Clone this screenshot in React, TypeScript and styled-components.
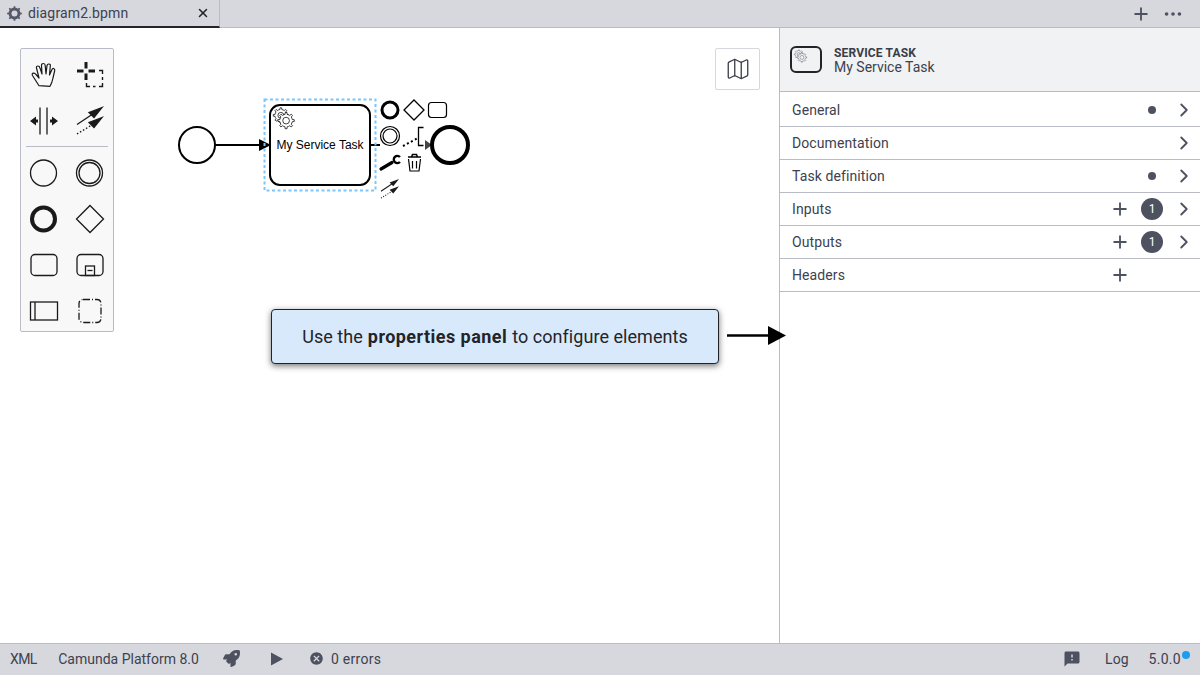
import React from 'react';
import styled, { createGlobalStyle } from 'styled-components';
import { Map, Plus, ChevronRight, Ellipsis, X } from 'lucide-react';
import { FaRocket } from 'react-icons/fa';
import { MdCancel, MdFeedback } from 'react-icons/md';

const GlobalStyle = createGlobalStyle`
  html, body {
    margin: 0;
    padding: 0;
    background: #fff;
    overflow: hidden;
  }
  body {
    font-family: Roboto, "Noto Sans", sans-serif;
    font-size: 14px;
    color: #22242a;
  }
`;

const AppFrame = styled.div`
  position: relative;
  display: flex;
  flex-direction: column;
  width: 1200px;
  height: 675px;
  overflow: hidden;
`;

const TabBar = styled.div`
  display: flex;
  align-items: stretch;
  height: 28px;
  box-sizing: border-box;
  background: #d6d8de;
  border-bottom: 1px solid #b9bcc6;
`;

const Tab = styled.div`
  display: flex;
  align-items: center;
  box-sizing: border-box;
  width: 220px;
  height: 28px;
  padding: 0 9px 0 7px;
  border-right: 1px solid #b9bcc6;
  border-bottom: 2px solid #22242a;
  color: #3d4150;
`;

const TabTitle = styled.span`
  flex: 1;
  margin-left: 6px;
  letter-spacing: 0.15px;
`;

const TabActions = styled.div`
  display: flex;
  align-items: center;
  gap: 11px;
  margin-left: auto;
  padding: 0 16px 0 0;
  color: #4d5160;
`;

const Main = styled.div`
  flex: 1;
  display: flex;
  min-height: 0;
`;

const Canvas = styled.div`
  position: relative;
  width: 779px;
  background: #fff;
`;

const DiagramSvg = styled.svg`
  display: block;
`;

const Palette = styled.div`
  position: absolute;
  left: 20px;
  top: 20px;
  box-sizing: border-box;
  width: 94px;
  height: 284px;
  padding: 3px 0 0;
  background: #f8f8f8;
  border: 1px solid #b9bcc6;
  border-radius: 2px;
`;

const PaletteGroup = styled.div`
  display: grid;
  grid-template-columns: 46px 46px;
  grid-auto-rows: 46px;
`;

const PaletteSeparator = styled.div`
  height: 1px;
  margin: 2px 5px 3px;
  background: #b9bcc6;
`;

const PaletteEntry = styled.div`
  display: flex;
  align-items: center;
  justify-content: center;
  color: #1a1a1a;
`;

const MiniMapToggle = styled.div`
  position: absolute;
  left: 715px;
  top: 20px;
  box-sizing: border-box;
  display: flex;
  align-items: center;
  justify-content: center;
  width: 45px;
  height: 42px;
  background: #fff;
  border: 1px solid #d6d8de;
  border-radius: 2px;
  color: #3a3d46;
`;

const Panel = styled.div`
  box-sizing: border-box;
  width: 421px;
  border-left: 1px solid #b9bcc6;
  background: #fff;
`;

const PanelHeader = styled.div`
  display: flex;
  align-items: center;
  box-sizing: border-box;
  height: 64px;
  padding: 0 0 0 10px;
  background: #f1f2f4;
  border-bottom: 1px solid #b9bcc6;
`;

const HeaderText = styled.div`
  display: flex;
  flex-direction: column;
  margin-left: 12px;
`;

const HeaderType = styled.span`
  font-size: 12px;
  line-height: 14px;
  font-weight: 700;
  letter-spacing: 0.15px;
  color: #3a3d46;
`;

const HeaderName = styled.span`
  font-size: 14px;
  line-height: 14px;
  color: #3d4150;
`;

const Row = styled.div`
  display: flex;
  align-items: center;
  box-sizing: border-box;
  height: 33px;
  padding: 0 0 0 12px;
  border-bottom: 1px solid #b9bcc6;
  color: #3d4150;
  ${PanelHeader} + & {
    height: 35px;
    padding-top: 2px;
  }
`;

const RowLabel = styled.span`
  flex: 1;
  letter-spacing: 0.1px;
`;

const RowSlot = styled.div<{ $width: number }>`
  display: flex;
  align-items: center;
  justify-content: center;
  width: ${(p) => p.$width}px;
  color: #4d5160;
`;

const Dot = styled.span`
  width: 8px;
  height: 8px;
  border-radius: 50%;
  background: #4d5160;
`;

const Badge = styled.span`
  display: flex;
  align-items: center;
  justify-content: center;
  width: 22px;
  height: 22px;
  border-radius: 50%;
  background: #4d5160;
  color: #fff;
  font-size: 12px;
`;

const Callout = styled.div`
  position: absolute;
  left: 271px;
  top: 309px;
  box-sizing: border-box;
  display: flex;
  align-items: center;
  justify-content: center;
  width: 448px;
  height: 55px;
  background: #d9e9fc;
  border: 1px solid #22242a;
  border-radius: 4px;
  box-shadow: 0 2px 6px rgba(0, 0, 0, 0.55);
  font-size: 18px;
  letter-spacing: 0.05px;
  color: #22242a;
  strong {
    font-weight: 700;
    margin: 0 5px;
    letter-spacing: 0.45px;
  }
`;

const CalloutArrow = styled.svg`
  position: absolute;
  left: 726px;
  top: 325px;
`;

const StatusBar = styled.div`
  display: flex;
  align-items: center;
  box-sizing: border-box;
  height: 32px;
  padding: 0 0 2px 10px;
  background: #d6d8de;
  border-top: 1px solid #b9bcc6;
  color: #3d4150;
`;

const StatusItem = styled.span<{ $left?: number; $spacing?: number }>`
  display: flex;
  align-items: center;
  margin-left: ${(p) => p.$left ?? 0}px;
  letter-spacing: ${(p) => p.$spacing ?? 0}px;
`;

const StatusRight = styled.div`
  display: flex;
  align-items: center;
  margin-left: auto;
  padding-right: 19px;
`;

const Version = styled.span`
  position: relative;
  margin-left: 20px;
  letter-spacing: 0.3px;
  &::after {
    content: '';
    position: absolute;
    right: -9px;
    top: 0;
    width: 8px;
    height: 8px;
    border-radius: 50%;
    background: #1e9cf0;
  }
`;

// gear outline, teeth computed around the centre
const gearPath = (cx: number, cy: number, ro: number, ri: number, teeth: number) => {
  const pts: string[] = [];
  const step = (Math.PI * 2) / teeth;
  for (let i = 0; i < teeth; i++) {
    const a = i * step;
    [
      [ri, a - step * 0.5],
      [ri, a - step * 0.22],
      [ro, a - step * 0.14],
      [ro, a + step * 0.14],
      [ri, a + step * 0.22],
    ].forEach(([r, t]) => {
      pts.push(`${(cx + r * Math.cos(t)).toFixed(2)} ${(cy + r * Math.sin(t)).toFixed(2)}`);
    });
  }
  return `M${pts.join('L')}Z`;
};

const TabGear = () => (
  <svg width="15" height="15" viewBox="0 0 15 15">
    <path d={gearPath(7.5, 7.5, 7.4, 5.9, 8)} fill="#55596a" />
    <circle cx="7.5" cy="7.5" r="3" fill="#d6d8de" />
  </svg>
);

const ConnectGlyph = ({ x, y, s = 1 }: { x: number; y: number; s?: number }) => (
  <g transform={`translate(${x} ${y}) scale(${s})`}>
    <line x1="0" y1="17" x2="15" y2="7" stroke="#1a1a1a" strokeWidth="1.4" />
    <path d="M25 0 L12 5 L17 10 Z" fill="#1a1a1a" />
    <line x1="0" y1="26.5" x2="14" y2="18" stroke="#1a1a1a" strokeWidth="1.4" strokeDasharray="1.5 2" />
    <path d="M25 10 L12 15 L17 20 Z" fill="#1a1a1a" />
  </g>
);

const Icon36 = ({ children }: { children: React.ReactNode }) => (
  <svg width="36" height="36" viewBox="0 0 36 36" fill="none" stroke="#1a1a1a" strokeWidth="1.3">
    {children}
  </svg>
);

const HandIcon = () => (
  <Icon36>
    <path
      transform="translate(0 -1)"
      strokeWidth="1.2"
      strokeLinejoin="round"
      d="M13 29.7L6.5 19.5Q5.5 17.5 7.5 17.2Q9 17 10 18.5L13 22L10.5 12Q10 10 12 10Q13.5 10 14 12L16 18L15.5 9.5Q15.5 7.5 17.5 7.5Q19 7.5 19.2 9.5L20 18L21 9.5Q21.5 7.8 23 8Q24.7 8.3 24.3 10L23.5 19L26 13.5Q26.8 12 28 12.7Q29.2 13.4 28.6 15L27 22Q26 27 24 30.3Z"
    />
  </Icon36>
);

const LassoIcon = () => (
  <Icon36>
    <g transform="translate(0 -1)">
      <path d="M14 6V12.5M14 17.5V24M5 15H11.5M16.5 15H23" strokeWidth="3" />
      <path d="M27 14.5H30.5V18M30.5 21V24M30.5 27V30.5H27M23.5 30.5H21M18 30.5H14.5V27" strokeWidth="1.4" />
    </g>
  </Icon36>
);

const SpaceIcon = () => (
  <Icon36>
    <path d="M14 4.5V31.5M21 4.5V31.5" />
    <path d="M4 18L10 13.5V22.5Z M32 18L26 13.5V22.5Z" fill="#1a1a1a" stroke="none" />
    <path d="M9 18H12M24 18H27" strokeWidth="3" />
  </Icon36>
);

const ConnectIcon = () => (
  <Icon36>
    <ConnectGlyph x={5} y={4.5} />
  </Icon36>
);

const StartIcon = () => (
  <Icon36>
    <circle cx="17.5" cy="18" r="13" />
  </Icon36>
);

const IntermediateIcon = () => (
  <Icon36>
    <circle cx="17.5" cy="18" r="13" />
    <circle cx="17.5" cy="18" r="10.5" />
  </Icon36>
);

const EndIcon = () => (
  <Icon36>
    <circle cx="17.5" cy="18" r="11.5" strokeWidth="4" />
  </Icon36>
);

const GatewayIcon = () => (
  <Icon36>
    <path d="M18 4.5L31.5 18L18 31.5L4.5 18Z" />
  </Icon36>
);

const TaskIcon = () => (
  <Icon36>
    <rect x="5" y="7.5" width="26" height="21" rx="4" />
  </Icon36>
);

const SubProcessIcon = () => (
  <Icon36>
    <rect x="5" y="7.5" width="26" height="21" rx="4" />
    <rect x="13.5" y="19" width="9" height="9.5" />
    <path d="M15.5 23.5H20.5" />
  </Icon36>
);

const PoolIcon = () => (
  <Icon36>
    <rect x="4.5" y="9" width="27" height="18" />
    <path d="M9 9V27" />
  </Icon36>
);

const GroupIcon = () => (
  <Icon36>
    <rect x="7" y="6.5" width="22" height="23" rx="4" strokeDasharray="7 2 1 2" />
  </Icon36>
);

const ServiceGears = ({
  dx,
  dy,
  s = 1,
  color = '#000',
  fill = '#fff',
}: {
  dx: number;
  dy: number;
  s?: number;
  color?: string;
  fill?: string;
}) => (
  <g transform={`translate(${dx} ${dy}) scale(${s})`} stroke={color} strokeWidth="0.7" fill={fill}>
    <path d={gearPath(7, 7, 7.2, 5.6, 8)} />
    <circle cx="7" cy="7" r="2.8" />
    <path d={gearPath(12, 12, 7.8, 6, 8)} />
    <circle cx="12" cy="12" r="3.2" />
  </g>
);

const Diagram = () => (
  <DiagramSvg width="779" height="615" viewBox="0 28 779 615">
    <line x1="215" y1="145" x2="262" y2="145" stroke="#000" strokeWidth="2" />
    <line x1="370" y1="145" x2="430" y2="145" stroke="#000" strokeWidth="2" />
    <circle cx="197" cy="145" r="18" fill="#fff" stroke="#000" strokeWidth="2" />
    <rect x="270" y="105" width="100" height="80" rx="10" fill="#fff" stroke="#000" strokeWidth="2" />
    <path d="M259 139 L271 145 L259 151 Z" fill="#000" />
    <text x="320" y="149" textAnchor="middle" fontFamily="'Liberation Sans', Arial, sans-serif" fontSize="12" fill="#000">
      My Service Task
    </text>
    <ServiceGears dx={273.5} dy={108} s={1.05} />
    <rect x="264.5" y="99.5" width="111" height="91" fill="none" stroke="#7cc6fb" strokeWidth="2" strokeDasharray="3 2.5" />
    {/* context pad sits on top of the outgoing flow */}
    <rect x="380" y="98" width="45" height="102" fill="#fff" />
    <path d="M425 140 L432 145 L425 150 Z" fill="#444" />
    <circle cx="450" cy="145" r="18" fill="#fff" stroke="#000" strokeWidth="4" />
    <circle cx="390" cy="110" r="8" fill="#fff" stroke="#000" strokeWidth="3" />
    <path d="M414 100 L424 110 L414 120 L404 110 Z" fill="#fff" stroke="#000" strokeWidth="1.3" />
    <rect x="428.5" y="102.5" width="18" height="15" rx="3" fill="#fff" stroke="#000" strokeWidth="1.2" />
    <circle cx="390" cy="136" r="9.5" fill="#fff" stroke="#000" strokeWidth="1.2" />
    <circle cx="390" cy="136" r="7" fill="#fff" stroke="#000" strokeWidth="1.2" />
    <line x1="403" y1="146" x2="418" y2="138" stroke="#000" strokeWidth="2" strokeDasharray="2 2.5" />
    <path d="M423.5 127.5 H418.5 V145.5 H423.5" fill="none" stroke="#000" strokeWidth="1.3" />
    <line x1="381" y1="169" x2="392" y2="162.5" stroke="#000" strokeWidth="3.2" strokeLinecap="round" />
    <path d="M400 157 A3.6 3.6 0 1 0 400 162" fill="none" stroke="#000" strokeWidth="2.4" />
    <path d="M408 157H421M411.5 157L412.5 154.5H416.5L417.5 157" fill="none" stroke="#000" strokeWidth="1.5" />
    <path d="M408.5 159L410 171H419L420.5 159 M412.5 161V168.5 M416.5 161V168.5" fill="none" stroke="#000" strokeWidth="1.2" />
    <ConnectGlyph x={381} y={179} s={0.72} />
  </DiagramSvg>
);

const rows = [
  { label: 'General', dot: true, chevron: true },
  { label: 'Documentation', chevron: true },
  { label: 'Task definition', dot: true, chevron: true },
  { label: 'Inputs', add: true, badge: 1, chevron: true },
  { label: 'Outputs', add: true, badge: 1, chevron: true },
  { label: 'Headers', add: true },
];

const App: React.FC = () => {
  return (
    <AppFrame>
      <GlobalStyle />
      <TabBar>
        <Tab>
          <TabGear />
          <TabTitle>diagram2.bpmn</TabTitle>
          <X size={14} strokeWidth={2.6} color="#22242a" />
        </Tab>
        <TabActions>
          <Plus size={20} strokeWidth={2.2} />
          <Ellipsis size={22} strokeWidth={2} />
        </TabActions>
      </TabBar>
      <Main>
        <Canvas>
          <Diagram />
          <Palette>
            <PaletteGroup>
              <PaletteEntry><HandIcon /></PaletteEntry>
              <PaletteEntry><LassoIcon /></PaletteEntry>
              <PaletteEntry><SpaceIcon /></PaletteEntry>
              <PaletteEntry><ConnectIcon /></PaletteEntry>
            </PaletteGroup>
            <PaletteSeparator />
            <PaletteGroup>
              <PaletteEntry><StartIcon /></PaletteEntry>
              <PaletteEntry><IntermediateIcon /></PaletteEntry>
              <PaletteEntry><EndIcon /></PaletteEntry>
              <PaletteEntry><GatewayIcon /></PaletteEntry>
              <PaletteEntry><TaskIcon /></PaletteEntry>
              <PaletteEntry><SubProcessIcon /></PaletteEntry>
              <PaletteEntry><PoolIcon /></PaletteEntry>
              <PaletteEntry><GroupIcon /></PaletteEntry>
            </PaletteGroup>
          </Palette>
          <MiniMapToggle>
            <Map size={26} strokeWidth={1.2} />
          </MiniMapToggle>
        </Canvas>
        <Panel>
          <PanelHeader>
            <svg width="32" height="27" viewBox="0 0 32 27">
              <rect x="1" y="1" width="30" height="25" rx="5" fill="none" stroke="#22242a" strokeWidth="2" />
              <ServiceGears dx={4.5} dy={4} s={0.62} color="#4d5160" fill="#f1f2f4" />
            </svg>
            <HeaderText>
              <HeaderType>SERVICE TASK</HeaderType>
              <HeaderName>My Service Task</HeaderName>
            </HeaderText>
          </PanelHeader>
          {rows.map((row) => (
            <Row key={row.label}>
              <RowLabel>{row.label}</RowLabel>
              <RowSlot $width={32}>{row.add && <Plus size={20} strokeWidth={2.2} />}</RowSlot>
              <RowSlot $width={32}>
                {row.dot && <Dot />}
                {row.badge && <Badge>{row.badge}</Badge>}
              </RowSlot>
              <RowSlot $width={32}>{row.chevron && <ChevronRight size={22} strokeWidth={2} />}</RowSlot>
            </Row>
          ))}
        </Panel>
      </Main>
      <StatusBar>
        <StatusItem $spacing={-0.6}>XML</StatusItem>
        <StatusItem $left={21.5}>Camunda Platform 8.0</StatusItem>
        <StatusItem $left={24}><FaRocket size={17} color="#4d5160" /></StatusItem>
        <StatusItem $left={30}>
          <svg width="14" height="14" viewBox="0 0 14 14">
            <path d="M1 0.5L13 7L1 13.5Z" fill="#4d5160" />
          </svg>
        </StatusItem>
        <StatusItem $left={25}><MdCancel size={15} color="#4d5160" /></StatusItem>
        <StatusItem $left={7} $spacing={0.3}>0 errors</StatusItem>
        <StatusRight>
          <MdFeedback size={18} color="#4d5160" />
          <StatusItem $left={24}>Log</StatusItem>
          <Version>5.0.0</Version>
        </StatusRight>
      </StatusBar>
      <Callout>
        Use the<strong>properties panel</strong>to configure elements
      </Callout>
      <CalloutArrow width="62" height="22" viewBox="0 0 62 22">
        <line x1="1" y1="10.5" x2="44" y2="10.5" stroke="#000" strokeWidth="2.6" />
        <path d="M42 1 L60 10.5 L42 20 Z" fill="#000" />
      </CalloutArrow>
    </AppFrame>
  );
};

export default App;
